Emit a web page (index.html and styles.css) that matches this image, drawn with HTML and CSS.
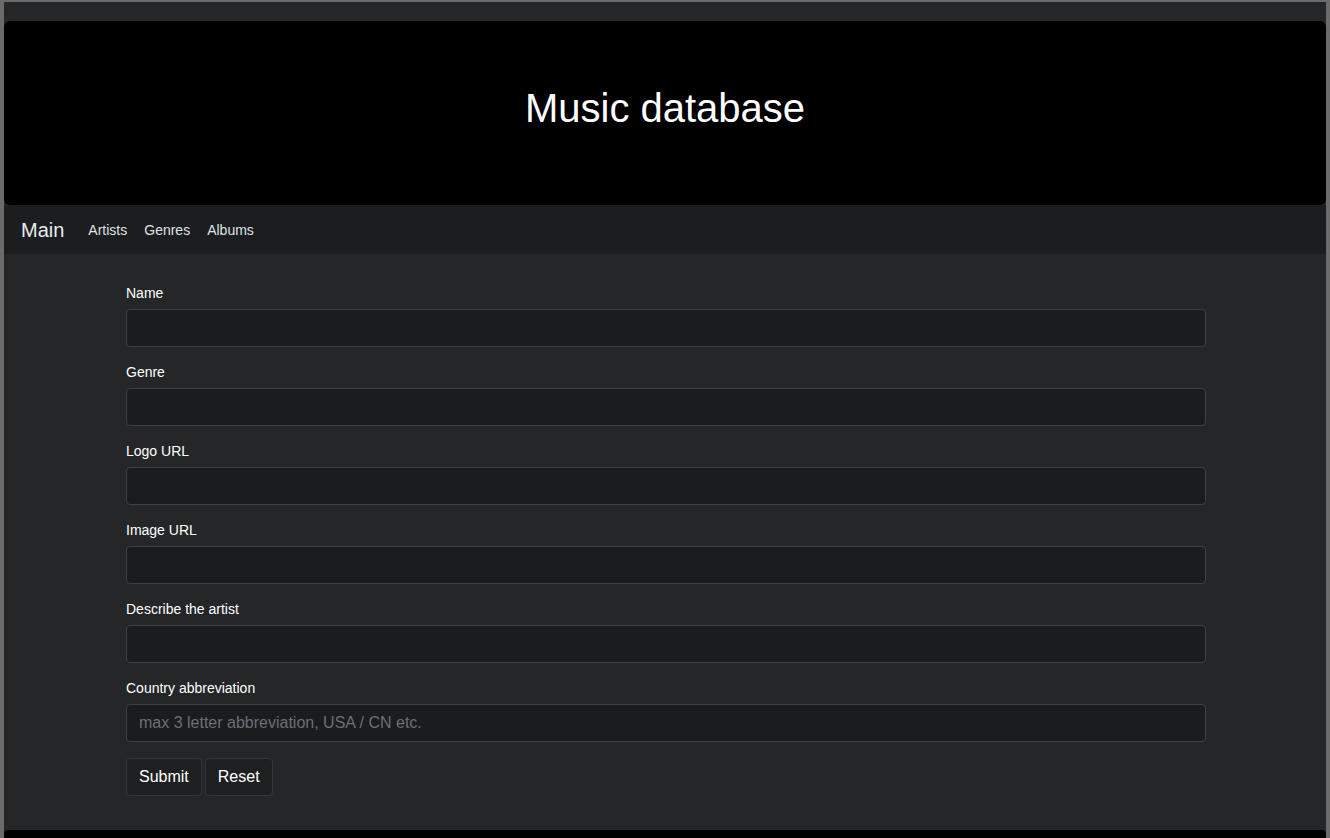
FILE: index.html
```html
<!DOCTYPE html>
<html lang="en">
<head>
<meta charset="utf-8">
<title>Music database</title>
<link rel="stylesheet" href="styles.css">
</head>
<body>
<div class="frame">
  <header class="hero">
    <h1 class="hero-title">Music database</h1>
  </header>
  <nav class="navbar">
    <a class="brand" href="#">Main</a>
    <a class="nav-link" href="#">Artists</a>
    <a class="nav-link" href="#">Genres</a>
    <a class="nav-link" href="#">Albums</a>
  </nav>
  <main class="content">
    <form class="form">
      <div class="group">
        <label class="label" for="name">Name</label>
        <input class="control" id="name" type="text">
      </div>
      <div class="group">
        <label class="label" for="genre">Genre</label>
        <input class="control" id="genre" type="text">
      </div>
      <div class="group">
        <label class="label" for="logo">Logo URL</label>
        <input class="control" id="logo" type="text">
      </div>
      <div class="group">
        <label class="label" for="image">Image URL</label>
        <input class="control" id="image" type="text">
      </div>
      <div class="group">
        <label class="label" for="desc">Describe the artist</label>
        <input class="control" id="desc" type="text">
      </div>
      <div class="group">
        <label class="label" for="country">Country abbreviation</label>
        <input class="control" id="country" type="text" placeholder="max 3 letter abbreviation, USA / CN etc.">
      </div>
      <div class="actions">
        <button class="btn" type="submit">Submit</button>
        <button class="btn" type="reset">Reset</button>
      </div>
    </form>
  </main>
  <footer class="footer"></footer>
</div>
</body>
</html>
```
FILE: styles.css
```css
html, body {
  margin: 0;
  padding: 0;
  height: 100%;
}
body {
  background: #6b6b6b;
  font-family: "Liberation Sans", Arial, sans-serif;
  color: #fff;
  overflow: hidden;
}
.frame {
  margin: 2px 4px 0 4px;
  background: #242628;
  padding-top: 19px;
  display: flex;
  flex-direction: column;
  min-height: calc(100% - 2px);
}
.hero {
  background: #000;
  border-radius: 6px;
  height: 184px;
  display: flex;
  align-items: center;
  justify-content: center;
}
.hero-title {
  margin: 0;
  font-weight: 400;
  font-size: 40px;
  line-height: 1.2;
  color: #fff;
  padding-bottom: 10px;
}
.navbar {
  background: #1c1d1f;
  height: 49px;
  display: flex;
  align-items: center;
  padding-left: 17px;
}
.brand {
  font-size: 20px;
  color: #e9ecef;
  text-decoration: none;
  margin-right: 16px;
  padding-top: 1px;
}
.nav-link {
  font-size: 14px;
  color: #dee2e6;
  text-decoration: none;
  padding: 1px 8px 0 8px;
}
.nav-link + .nav-link {
  margin-left: 1px;
}
.content {
  background: #242628;
  padding: 29px 0 34px 0;
}
.form {
  width: 1080px;
  margin-left: 122px;
  display: flex;
  flex-direction: column;
}
.group {
  display: flex;
  flex-direction: column;
  margin-bottom: 15px;
}
.label {
  font-size: 14px;
  line-height: 21px;
  color: #fff;
  margin-bottom: 5px;
}
.control {
  box-sizing: border-box;
  height: 38px;
  width: 100%;
  background: #1b1c1e;
  border: 1px solid #3b4047;
  border-radius: 4px;
  padding: 6px 12px;
  font-family: "Liberation Sans", Arial, sans-serif;
  font-size: 16px;
  color: #fff;
  outline: none;
}
.control::placeholder {
  color: #6c6f73;
}
.actions {
  display: flex;
  gap: 3px;
  margin-top: 1px;
}
.btn {
  box-sizing: border-box;
  height: 38px;
  padding: 6px 12px;
  background: #1e1f21;
  border: 1px solid #33373c;
  border-radius: 4px;
  color: #fff;
  font-family: "Liberation Sans", Arial, sans-serif;
  font-size: 16px;
}
.footer {
  background: #000;
  flex: 1;
  border-radius: 4px 4px 0 0;
  min-height: 8px;
}
```
